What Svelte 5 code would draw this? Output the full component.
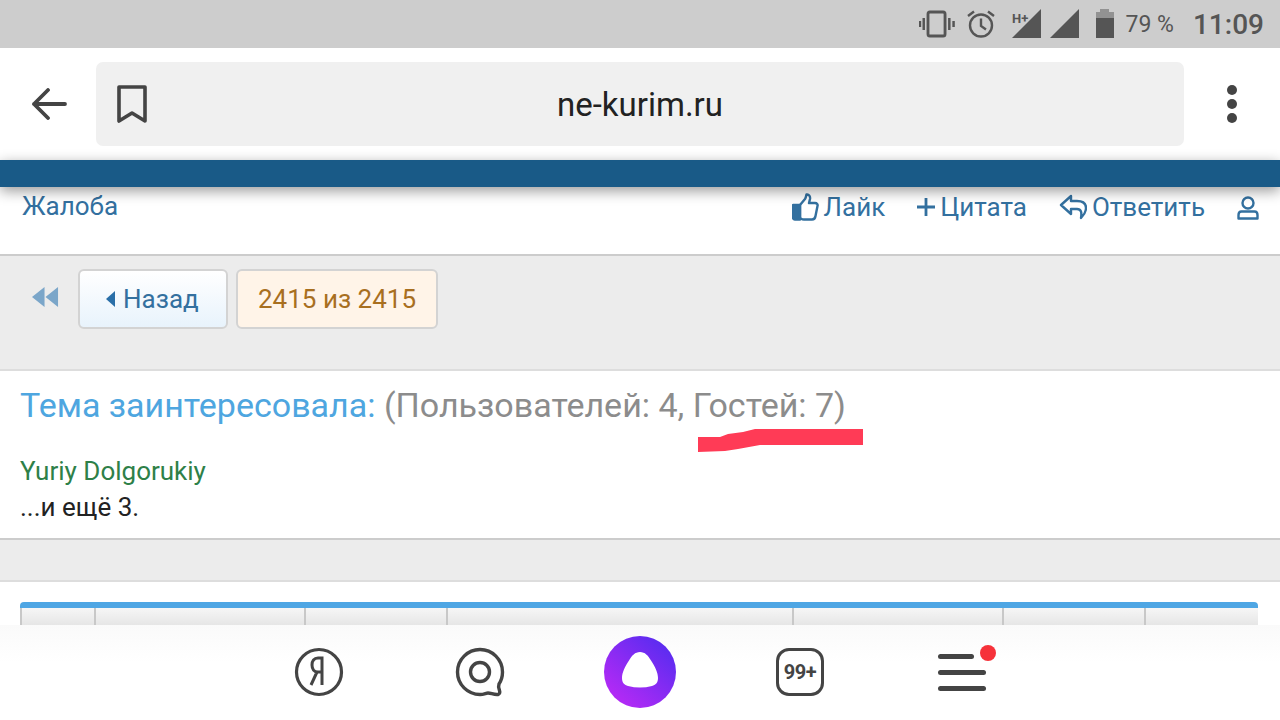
<script>
  const columns = [74, 210, 142, 346, 210, 142, 113];
</script>

<div class="page">
  <header class="status">
    <svg class="ic" width="36" height="28" viewBox="0 0 38 28" fill="none" stroke="#555" preserveAspectRatio="none">
      <rect x="9.5" y="2" width="18" height="24" rx="2" stroke-width="3" />
      <path d="M5 8v12M1 11v6M32 8v12M36.500 11v6" stroke-width="2.600" />
    </svg>
    <svg class="ic alarm" width="30" height="30" viewBox="0 0 30 30" fill="none" stroke="#555">
      <circle cx="15" cy="16.500" r="11" stroke-width="2.400" />
      <path d="M15 9.500v7.500l5 3.500M2 7l6-4.500M28 7l-6-4.500" stroke-width="2.400" />
    </svg>
    <svg class="ic net" width="30" height="30" viewBox="0 0 30 30">
      <path d="M29 0v29H0z" fill="#555" />
      <text x="0" y="14" class="hplus">H+</text>
    </svg>
    <svg class="ic sig" width="30" height="30" viewBox="0 0 30 30"><path d="M29 0v29H0z" fill="#555" /></svg>
    <svg class="ic bat" width="20" height="30" viewBox="0 0 20 30">
      <path d="M5 0h9v3h5v7H1V3h4z" fill="#929292" />
      <path d="M1 9h18v20H1z" fill="#555" />
    </svg>
    <span class="pct">79 %</span>
    <span class="clock">11:09</span>
  </header>

  <div class="toolbar">
    <svg class="back" width="36" height="32" viewBox="0 0 36 32" fill="none" stroke="#444" stroke-width="3.800" stroke-linecap="round" stroke-linejoin="round">
      <path d="M34 16H3M17 2L3 16l14 14" />
    </svg>
    <div class="omnibox">
      <svg class="mark" width="30" height="38" viewBox="0 0 30 38" fill="none" stroke="#444" stroke-width="3.600" stroke-linejoin="round">
      <path d="M2 2h26v34l-13-8-13 8z" />
      </svg>
      <span class="url">ne-kurim.ru</span>
    </div>
    <div class="dots"><i></i><i></i><i></i></div>
  </div>

  <div class="sitebar"></div>

  <main class="content">
    <section class="post-actions">
      <a class="report" href="#r">Жалоба</a>
      <div class="actions">
        <a href="#l" class="act like">
          <svg width="27" height="28" viewBox="0 0 27 28" fill="none" stroke="#33709f" stroke-width="2.400" stroke-linejoin="round">
            <path d="M8 12l5-6c1-1.500 1-3 1.500-4.500 2.500-.5 4 2 3.500 4.500l-1 4h6c2 0 3 1.500 2.500 3l-2 10c-.3 2-1.500 3.500-3.500 3.500H12c-2 0-3-1-4-1.500z" />
            <path d="M1 12h7v14.500H3c-1.200 0-2-.8-2-2z" fill="#33709f" />
          </svg>
          Лайк
        </a>
        <a href="#q" class="act quote">
          <svg width="20" height="20" viewBox="0 0 20 20" stroke="#33709f" stroke-width="2.800"><path d="M1 10h18M10 1v18" /></svg>
          Цитата
        </a>
        <a href="#a" class="act reply">
          <svg width="28" height="26" viewBox="0 0 28 26" fill="none" stroke="#33709f" stroke-width="2.400" stroke-linejoin="round">
            <path d="M12 2L2 11l10 9v-5h6c4 0 5 3 4 9 4-4 5-7 5-10 0-5-4-7-9-7h-6z" />
          </svg>
          Ответить
        </a>
        <svg class="user" width="22" height="24" viewBox="0 0 22 24" fill="none" stroke="#33709f" stroke-width="2.400">
          <circle cx="11" cy="7" r="5.500" />
          <path d="M4.500 15.500h13c2 0 3 1.500 3 3.500v3.500H1.500V19c0-2 1-3.500 3-3.500z" stroke-linejoin="round" />
        </svg>
      </div>
    </section>

    <section class="pager">
      <svg class="rewind" width="27" height="20" viewBox="0 0 28 20" fill="#7ba6c9" preserveAspectRatio="none">
        <path d="M13 0v20L0 10zM27 0v20L14 10z" />
      </svg>
      <a class="btn prev" href="#b"><span class="tri"></span>Назад</a>
      <span class="btn count">2415 из 2415</span>
    </section>

    <section class="viewers">
      <h2><span class="lead">Тема заинтересовала:</span> <span class="tally">(Пользователей: 4, Гостей: 7)</span></h2>
      <div class="scribble"></div>
      <a class="member" href="#u">Yuriy Dolgorukiy</a>
      <p class="more">...и ещё 3.</p>
    </section>

    <div class="gap"></div>

    <section class="table-wrap">
      <div class="table-head">
        {#each columns as w}
          <div class="col" style="width: {w}px"></div>
        {/each}
      </div>
    </section>
  </main>

  <nav class="bottom">
    <svg class="ya" width="50" height="50" viewBox="0 0 50 50" fill="none" stroke="#444" stroke-width="3.200">
      <circle cx="25" cy="25" r="22.500" />
      <path d="M28 38V11h-4c-4 0-6 3-6 7s2 7 6 7h4M23 25l-6 13" stroke-width="3" />
    </svg>
    <svg width="50" height="50" viewBox="0 0 50 50" fill="none" stroke="#444" stroke-width="3.400" stroke-linejoin="round">
      <path d="M25 2.500a22.500 22.500 0 1 0 0 45c4 0 6-1.500 8-1.500 3 0 6 2 10 1.500 2-.5 2-2.500 1.500-4-.8-2-1.500-4-.5-6.500 2-3 3.500-7 3.500-12A22.500 22.500 0 0 0 25 2.500z" />
      <circle cx="25" cy="25" r="9.500" />
    </svg>
    <svg width="72" height="72" viewBox="0 0 72 72">
      <defs>
        <linearGradient id="alice" x1="0.850" y1="0.100" x2="0.200" y2="0.850">
          <stop offset="0" stop-color="#5a2cf0" />
          <stop offset="1" stop-color="#b02af5" />
        </linearGradient>
      </defs>
      <circle cx="36" cy="36" r="36" fill="url(#alice)" />
      <path d="M36 16c-5 0-8 3.500-11 8.500-4 6-7 12-7 17.500 0 5 2.500 7 6 8 4 1 8 1.500 12 1.500s8-.5 12-1.500c3.500-1 6-3 6-8 0-5.500-3-11.500-7-17.500-3-5-6-8.500-11-8.500z" fill="#fff" />
    </svg>
    <div class="tabs-count">99+</div>
    <div class="menu">
      <i class="short"></i><i></i><i></i>
      <span class="badge"></span>
    </div>
  </nav>
</div>

<style>
  :global(body) {
    margin: 0;
    background: #fff;
  }

  .page {
    width: 1280px;
    height: 720px;
    display: flex;
    flex-direction: column;
    overflow: hidden;
    font-family: Roboto, "Liberation Sans", sans-serif;
  }

  a {
    text-decoration: none;
  }

  .status {
    flex: none;
    height: 48px;
    display: flex;
    align-items: center;
    justify-content: flex-end;
    padding-right: 16px;
    background: #cdcdcd;
    color: #555;
    box-sizing: border-box;
  }

  .ic {
    flex: none;
  }

  .alarm {
    margin-left: 11px;
  }

  .net {
    margin-left: 16px;
  }

  .hplus {
    font-size: 13px;
    font-weight: 700;
    fill: #555;
  }

  .sig {
    margin-left: 8px;
  }

  .bat {
    margin-left: 15px;
  }

  .pct {
    margin-left: 11px;
    font-size: 23px;
  }

  .clock {
    margin-left: 19px;
    font-size: 28px;
    font-weight: 500;
  }

  .toolbar {
    flex: none;
    height: 112px;
    display: flex;
    align-items: center;
    background: #fff;
    padding-left: 31px;
    padding-right: 42px;
    box-sizing: border-box;
  }

  .back {
    flex: none;
  }

  .omnibox {
    flex: 1;
    position: relative;
    margin-left: 29px;
    height: 84px;
    display: flex;
    align-items: center;
    justify-content: center;
    background: #f0f0f0;
    border-radius: 7px;
  }

  .mark {
    position: absolute;
    left: 21px;
    top: 23px;
  }

  .url {
    font-size: 33px;
    color: #222;
  }

  .dots {
    width: 12px;
    margin-left: 42px;
    display: flex;
    flex-direction: column;
    gap: 4px;
    align-items: center;
  }

  .dots i {
    width: 10px;
    height: 10px;
    border-radius: 50%;
    background: #444;
  }

  .sitebar {
    flex: none;
    height: 27px;
    background: #195a87;
    box-shadow: 0 4px 14px rgba(0, 0, 0, 0.4);
    position: relative;
    z-index: 1;
  }

  .content {
    flex: 1;
    min-height: 0;
    overflow: hidden;
    background: #fff;
  }

  .post-actions {
    height: 69px;
    box-sizing: border-box;
    display: flex;
    justify-content: space-between;
    padding: 3px 21px 0 22px;
    border-bottom: 2px solid #ccc;
    font-size: 26px;
  }

  .report,
  .act {
    color: #33709f;
    line-height: 34px;
  }

  .report {
    margin-top: -1px;
  }

  .actions {
    display: flex;
    align-items: flex-start;
  }

  .act {
    display: flex;
    align-items: center;
    gap: 5px;
  }

  .like {
    margin-right: 31px;
  }

  .quote {
    gap: 4px;
    margin-right: 32px;
  }

  .reply {
    gap: 5px;
    margin-right: 32px;
  }

  .user {
    margin-top: 6px;
  }

  .pager {
    height: 115px;
    box-sizing: border-box;
    display: flex;
    align-items: flex-start;
    padding: 13px 0 0 32px;
    background: #ececec;
    border-bottom: 2px solid #ddd;
  }

  .rewind {
    margin-top: 18px;
    margin-right: 19px;
  }

  .btn {
    height: 60px;
    box-sizing: border-box;
    display: flex;
    align-items: center;
    border: 2px solid #d3d3d3;
    border-radius: 6px;
    font-size: 26px;
  }

  .prev {
    width: 150px;
    padding-left: 26px;
    color: #33709f;
    background: linear-gradient(#fff, #e8f3fc);
  }

  .tri {
    width: 0;
    height: 0;
    margin-right: 8px;
    border-style: solid;
    border-width: 8px 9px 8px 0;
    border-color: transparent #2a6fa8 transparent transparent;
  }

  .count {
    margin-left: 8px;
    width: 202px;
    justify-content: center;
    color: #a86f1f;
    background: #fff4e8;
  }

  .viewers {
    height: 169px;
    box-sizing: border-box;
    padding: 11px 20px 0;
    border-bottom: 2px solid #ccc;
    position: relative;
  }

  h2 {
    margin: 0;
    font-size: 34px;
    font-weight: 400;
    line-height: 46px;
  }

  .lead {
    color: #4ea6e0;
  }

  .tally {
    color: #8c8c8c;
  }

  .scribble {
    position: absolute;
    left: 698px;
    top: 58px;
    width: 165px;
    height: 23px;
    background: #ff3b56;
    clip-path: polygon(0 8px, 22px 8px, 30px 5px, 45px 3px, 57px 0, 165px 0, 165px 16px, 62px 16px, 40px 20px, 27px 22px, 0 23px);
  }

  .member {
    display: block;
    margin-top: 25px;
    color: #2e8048;
    font-size: 26px;
    line-height: 36px;
  }

  .more {
    margin: 0;
    font-size: 26px;
    line-height: 36px;
    color: #222;
  }

  .gap {
    height: 40px;
    background: #ececec;
    border-bottom: 2px solid #ddd;
  }

  .table-wrap {
    padding: 20px 22px 0 20px;
  }

  .table-head {
    display: flex;
    height: 23px;
    border-top: 6px solid #4ea6e4;
    border-radius: 4px 4px 0 0;
    background: linear-gradient(#f6f6f6, #e0e0e0);
  }

  .col {
    flex: none;
    box-sizing: border-box;
    border-left: 2px solid #c8c8c8;
  }

  .bottom {
    flex: none;
    height: 95px;
    box-sizing: border-box;
    display: grid;
    grid-template-columns: repeat(5, 160px);
    justify-content: center;
    justify-items: center;
    align-items: center;
    padding-bottom: 2px;
    background: linear-gradient(#fafafa, #fff 40%);
    position: relative;
    z-index: 1;
  }

  .ya {
    margin-right: 2px;
  }

  .tabs-count {
    width: 48px;
    height: 48px;
    box-sizing: border-box;
    display: flex;
    align-items: center;
    justify-content: center;
    border: 3.500px solid #444;
    border-radius: 13px;
    color: #444;
    font-size: 20px;
    font-weight: 700;
    letter-spacing: -0.5px;
  }

  .menu {
    position: relative;
    width: 48px;
    margin-left: 4px;
    margin-top: 2px;
    display: flex;
    flex-direction: column;
    gap: 11px;
  }

  .menu i {
    display: block;
    height: 5px;
    border-radius: 3px;
    background: #444;
  }

  .menu .short {
    width: 36px;
  }

  .badge {
    position: absolute;
    right: -10px;
    top: -9px;
    width: 16px;
    height: 16px;
    border-radius: 50%;
    background: #f6323a;
  }
</style>
